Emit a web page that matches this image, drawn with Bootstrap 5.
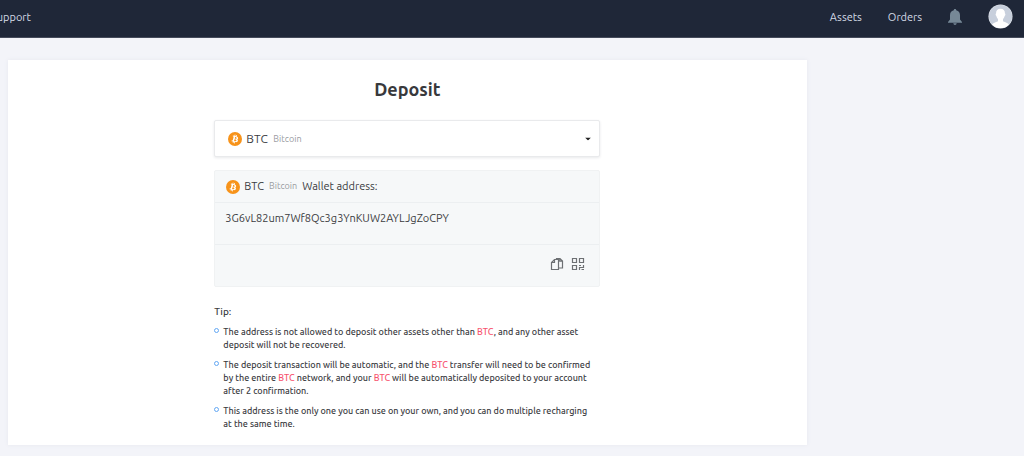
<!DOCTYPE html>
<html lang="en">
<head>
<meta charset="utf-8">
<meta name="viewport" content="width=device-width, initial-scale=1">
<title>Deposit</title>
<link href="https://cdn.jsdelivr.net/npm/bootstrap@5.3.0/dist/css/bootstrap.min.css" rel="stylesheet">
<style>
body{background:#f3f4f9;color:#3b3c3f;font-family:Ubuntu,"Noto Sans",sans-serif;font-size:10px;line-height:13px}
.topbar{background:#1f2738;border-bottom:1px solid #454b5b;height:38px;padding:0 11px 4px 0;overflow:hidden}
.topbar a{color:#d3dae6;font-size:11px;line-height:16px;text-decoration:none}
.topbar .support-link{margin-left:-9px}
.topbar nav{gap:26px}
.icon-btn{border:0;background:none;padding:0;display:flex}
.sheet{width:78%;margin:22px 0 11px 8px;padding:17px 16px 14px;background:#fff;box-shadow:0 0 4px #e6e8ef}
.deposit{max-width:386px}
h1{font-size:18px;line-height:25px;font-weight:600;color:#38393c;margin-bottom:18px}
.coin-picker{margin-bottom:13px}
.coin-picker select{appearance:none;width:100%;height:37px;border:1px solid #e9eaec;border-radius:2px;background:#fff;box-shadow:0 1px 3px #e8e9eb;padding:0 31px;font-size:12px;color:#3b3c3f}
.coin-picker svg,.coin-name{position:absolute;pointer-events:none;top:50%;transform:translateY(-50%)}
.coin-picker .coin-mark{left:14px}
.coin-picker .caret{right:9px}
.coin-picker .coin-name{left:59px}
.coin-name-text{color:#999b9f;font-size:9px}
.wallet{background:#f6f8f9;border:1px solid #f0f2f3;border-radius:2px;margin-bottom:18px}
.wallet-head{height:31px;padding:0 11px;font-size:11px;gap:5px}
.wallet-head svg{margin-right:-1px}
.wallet-body{height:43px;padding:7px 10px;border-top:1px solid #eceff1;border-bottom:1px solid #eceff1;font-size:11px;line-height:16px}
.wallet-foot{height:41px;padding:0 14px 4px;gap:7px}
h2{font-size:10px;line-height:14px;font-weight:500;margin-bottom:7px}
.tips{gap:7px;padding-right:4px;font-size:9px;font-weight:500;color:#3b3c3f}
.tips li{padding-left:9px;position:relative}
.tips li::before{content:"";position:absolute;left:0;top:2px;width:5px;height:5px;border:1px solid #63a8f4;border-radius:50%}
.coin-code{color:#f7536e}
</style>
</head>
<body>
<svg class="d-none" aria-hidden="true">
<symbol id="btc" viewBox="0 0 32 32"><circle cx="16" cy="16" r="16" fill="#f7931a"/><path fill="#fff" d="M23.2 14c.3-2.100-1.300-3.200-3.500-4l.7-2.900-1.700-.4-.7 2.800-1.400-.3.700-2.800-1.700-.5-.8 2.900-3.500-.8-.5 1.800 1.300.3c.7.200.8.600.8 1l-2 7.900c-.1.200-.3.500-.8.400l-1.300-.3-.8 2 3.400.8-.7 2.900 1.700.4.700-2.800 1.400.3-.7 2.800 1.700.5.800-2.900c3 .6 5.200.3 6.100-2.400.8-2.100 0-3.400-1.500-4.200 1.100-.2 1.900-1 2.300-2.500zm-4 5.600c-.5 2.200-4.100 1-5.300.7l.9-3.800c1.200.3 5 .9 4.400 3.100zm.6-5.600c-.5 2-3.500 1-4.400.7l.9-3.400c1 .2 4.100.7 3.500 2.700z"/></symbol>
</svg>
<header class="topbar d-flex align-items-center justify-content-between">
<a href="#" class="support-link">Support</a>
<nav class="d-flex align-items-center">
<a href="#">Assets</a>
<a href="#">Orders</a>
<button type="button" class="icon-btn" aria-label="Notifications"><svg width="14" height="16" viewBox="0 0 14 16" fill="#768896"><path d="M7 0c.8 0 1.200.5 1.200 1.200C10.800 1.800 12 3.800 12 6.300v4.200l2 2.500v.7H0V13l2-2.500V6.300c0-2.500 1.200-4.500 3.800-5.100C5.800.5 6.200 0 7 0zM5.300 14.300h3.400C8.500 15.400 7.900 16 7 16s-1.500-.6-1.700-1.700z"/></svg></button>
<button type="button" class="icon-btn" aria-label="Account"><svg width="25" height="25" viewBox="0 0 26 26"><defs><clipPath id="face"><circle cx="13" cy="13" r="12"/></clipPath></defs><circle cx="13" cy="13" r="12.500" fill="#e4e8ee"/><g clip-path="url(#face)"><path fill="#c7cfdc" d="M0 0h26v26H0z"/><path fill="#fff" d="M13 5c3.200 0 4.800 2 4.600 5 .7.100.7 1.900-.3 2.600-.3 1.500-1 2.500-1.700 3.100v2c.6 1.200 5.400 1.500 6.600 4.300V26H3.800v-4c1.200-2.800 6-3.100 6.600-4.300v-2c-.7-.6-1.400-1.600-1.700-3.100-1-.7-1-2.500-.3-2.600C8.200 7 9.800 5 13 5z"/></g></svg></button>
</nav>
</header>
<main class="sheet">
<div class="deposit mx-auto">
<h1 class="text-center">Deposit</h1>
<div class="coin-picker position-relative">
<select aria-label="Coin"><option>BTC</option></select>
<svg class="coin-mark" width="14" height="14"><use href="#btc"/></svg>
<span class="coin-name coin-name-text">Bitcoin</span>
<svg class="caret" width="6" height="3" viewBox="0 0 6 3"><path d="M0 0h6L3 3z" fill="#222"/></svg>
</div>
<section class="wallet">
<div class="wallet-head d-flex align-items-center"><svg width="14" height="14"><use href="#btc"/></svg><span>BTC</span><span class="coin-name-text">Bitcoin</span><span>Wallet address:</span></div>
<div class="wallet-body">3G6vL82um7Wf8Qc3g3YnKUW2AYLJgZoCPY</div>
<div class="wallet-foot d-flex align-items-center justify-content-end">
<button type="button" class="icon-btn" aria-label="Copy address"><svg width="14" height="14" viewBox="0 0 14 14" fill="none" stroke="#6d7073" stroke-width="1.200"><path d="M4.500 2.500h4v10h-7V5.500zM4.500 2.500v3h-3M6.500 2.500v-1h3.500l2.500 2.500v7H8.500M9.800 1.500v2.700h2.700"/></svg></button>
<button type="button" class="icon-btn" aria-label="Show QR code"><svg width="14" height="14" viewBox="0 0 14 14" fill="none" stroke="#6d7073" stroke-width="1.200"><path d="M1.500 1.500h4v4h-4zM8.500 1.500h4v4h-4zM1.500 8.500h4v4h-4zM8 8.500h2M12.500 8v2.500H9M8.500 10v3M10.500 12.500H13"/></svg></button>
</div>
</section>
<h2>Tip:</h2>
<ul class="tips list-unstyled d-flex flex-column mb-0">
<li>The address is not allowed to deposit other assets other than <span class="coin-code">BTC</span>, and any other asset deposit will not be recovered.</li>
<li>The deposit transaction will be automatic, and the <span class="coin-code">BTC</span> transfer will need to be confirmed by the entire <span class="coin-code">BTC</span> network, and your <span class="coin-code">BTC</span> will be automatically deposited to your account after 2 confirmation.</li>
<li>This address is the only one you can use on your own, and you can do multiple recharging at the same time.</li>
</ul>
</div>
</main>
<script src="https://cdn.jsdelivr.net/npm/bootstrap@5.3.0/dist/js/bootstrap.bundle.min.js"></script>
</body>
</html>
